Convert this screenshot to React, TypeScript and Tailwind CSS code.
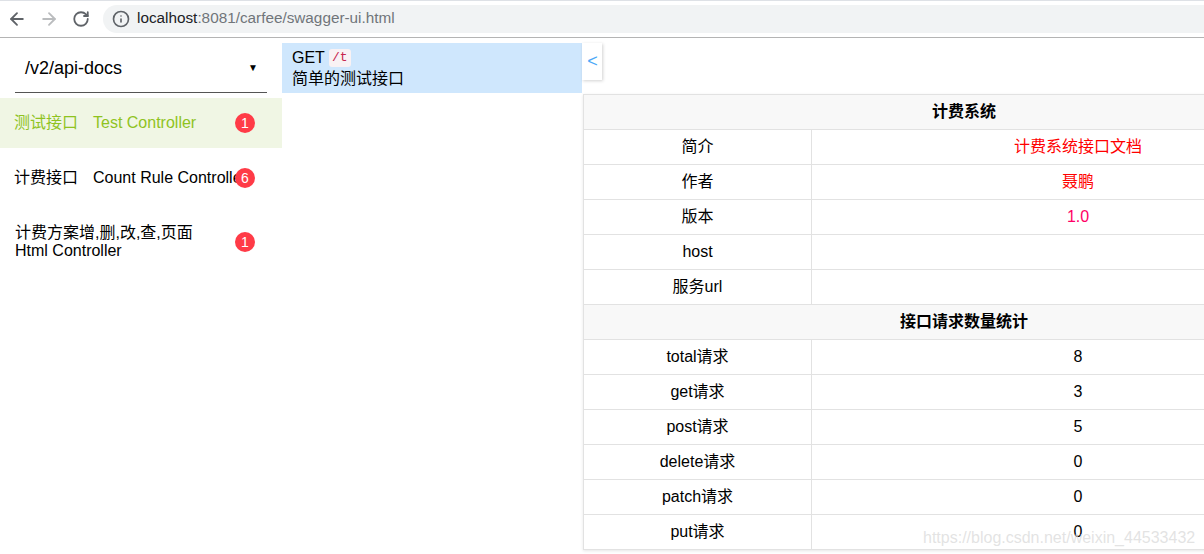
import React from 'react';
import { ArrowLeft, ArrowRight, RotateCw, Info } from 'lucide-react';

const FONT = '"Liberation Sans", "Noto Sans CJK SC", sans-serif';

const groups = [
    { title: '测试接口', sub: 'Test Controller', count: 1, active: true },
    { title: '计费接口', sub: 'Count Rule Controller', count: 6, active: false },
];

const infoRows = [
    { label: '简介', value: '计费系统接口文档', color: 'text-[#ff0000]' },
    { label: '作者', value: '聂鹏', color: 'text-[#ff0000]' },
    { label: '版本', value: '1.0', color: 'text-[#ff0066]' },
    { label: 'host', value: '', color: '' },
    { label: '服务url', value: '', color: '' },
];

const countRows = [
    { label: 'total请求', value: 8 },
    { label: 'get请求', value: 3 },
    { label: 'post请求', value: 5 },
    { label: 'delete请求', value: 0 },
    { label: 'patch请求', value: 0 },
    { label: 'put请求', value: 0 },
];

const Badge = ({ count }: { count: number }) => (
    <span className="absolute left-[235px] top-1/2 -translate-y-1/2 w-5 h-5 rounded-full bg-[#ff3b47] text-white text-sm leading-5 text-center">
        {count}
    </span>
);

const Row = ({ label, value, color }: { label: string; value: string | number; color?: string }) => (
    <tr className="h-[35px]">
        <td className="border border-[#e2e2e2] text-center p-0">{label}</td>
        <td className={`border border-[#e2e2e2] text-center p-0 ${color ?? ''}`}>{value}</td>
    </tr>
);

const HeadRow = ({ title }: { title: string }) => (
    <tr className="h-[35px] bg-[#f8f8f8]">
        <th colSpan={2} className="border border-[#e2e2e2] text-center font-bold p-0">{title}</th>
    </tr>
);

export default function App() {
    return (
        <div className="relative w-[1204px] h-[554px] overflow-hidden bg-white text-black text-base" style={{ fontFamily: FONT }}>
            {/* browser chrome */}
            <div className="h-[38px] flex items-center border-t border-t-[#dee1e6] border-b border-b-[#b4b4b4] pl-[7px]">
                <ArrowLeft size={20} strokeWidth={2.2} className="text-[#5f6368]" />
                <ArrowRight size={20} strokeWidth={2.2} className="text-[#babcbe] ml-[12px]" />
                <RotateCw size={18} strokeWidth={2.4} className="text-[#5f6368] ml-[13px]" />
                <div className="flex-1 h-[28px] ml-[13px] mb-[1px] pl-[9px] flex items-center bg-[#f1f3f4] rounded-l-full text-[15.3px]">
                    <Info size={18} strokeWidth={2.2} className="text-[#5f6368]" />
                    <span className="ml-[7px] text-[#202124]">localhost</span>
                    <span className="text-[#70757a]">:8081/carfee/swagger-ui.html</span>
                </div>
            </div>

            <div className="flex">
                {/* group list */}
                <div className="w-[282px] shrink-0">
                    <div className="h-[55px] mx-[15px] pt-[5px] pl-[10px] pr-[5px] flex items-center justify-between border-b border-[#555555] text-lg">
                        <span>/v2/api-docs</span>
                        <span className="text-[10px] mr-[4px]">▼</span>
                    </div>
                    <div className="mt-[5px]">
                        {groups.map((g) => (
                            <div
                                key={g.sub}
                                className={`relative h-[50px] mb-[5px] pl-[14px] flex items-center whitespace-nowrap ${g.active ? 'bg-[#f0f6e4] text-[#8fc31f]' : ''}`}
                            >
                                <span>{g.title}</span>
                                <span className="ml-[15px]">{g.sub}</span>
                                <Badge count={g.count} />
                            </div>
                        ))}
                        <div className="relative h-[50px] mt-[14px] pl-[15px] flex flex-col justify-center leading-[18px]">
                            <span>计费方案增,删,改,查,页面</span>
                            <span>Html Controller</span>
                            <Badge count={1} />
                        </div>
                    </div>
                </div>

                {/* api list */}
                <div className="w-[300px] shrink-0 pt-[5px]">
                    <div className="h-[50px] pl-[10px] bg-[#cfe7fd] pt-[4px]">
                        <div className="flex items-center h-[21px]">
                            GET
                            <code className="ml-[4px] px-[3px] h-[18px] leading-[18px] rounded-[3px] bg-[#f9f2f4] text-[#c7254e] text-[13px]" style={{ fontFamily: '"Liberation Mono", monospace' }}>/t</code>
                        </div>
                        <div className="leading-[22px]">简单的测试接口</div>
                    </div>
                </div>

                {/* detail */}
                <div className="flex-1 min-w-0 pl-[1px]">
                    <div className="h-[56px] pt-[5px]">
                        <div className="w-[20px] h-[37px] -ml-[1px] pl-[1px] bg-white text-[#4aa8f7] text-center text-lg leading-[37px] shadow-[1px_1px_3px_rgba(0,0,0,0.18)]">&lt;</div>
                    </div>
                    <table className="w-[762px] max-w-none border-collapse table-fixed shadow-[0_1px_3px_rgba(0,0,0,0.1)]">
                        <colgroup>
                            <col className="w-[228px]" />
                            <col />
                        </colgroup>
                        <tbody>
                            <HeadRow title="计费系统" />
                            {infoRows.map((r) => (
                                <Row key={r.label} label={r.label} value={r.value} color={r.color} />
                            ))}
                            <HeadRow title="接口请求数量统计" />
                            {countRows.map((r) => (
                                <Row key={r.label} label={r.label} value={r.value} />
                            ))}
                        </tbody>
                    </table>
                </div>
            </div>

            {/* csdn watermark */}
            <span className="absolute left-[923px] top-[526px] text-base text-[#dcdcdc]/80 whitespace-nowrap">https://blog.csdn.net/weixin_44533432</span>
        </div>
    );
}
